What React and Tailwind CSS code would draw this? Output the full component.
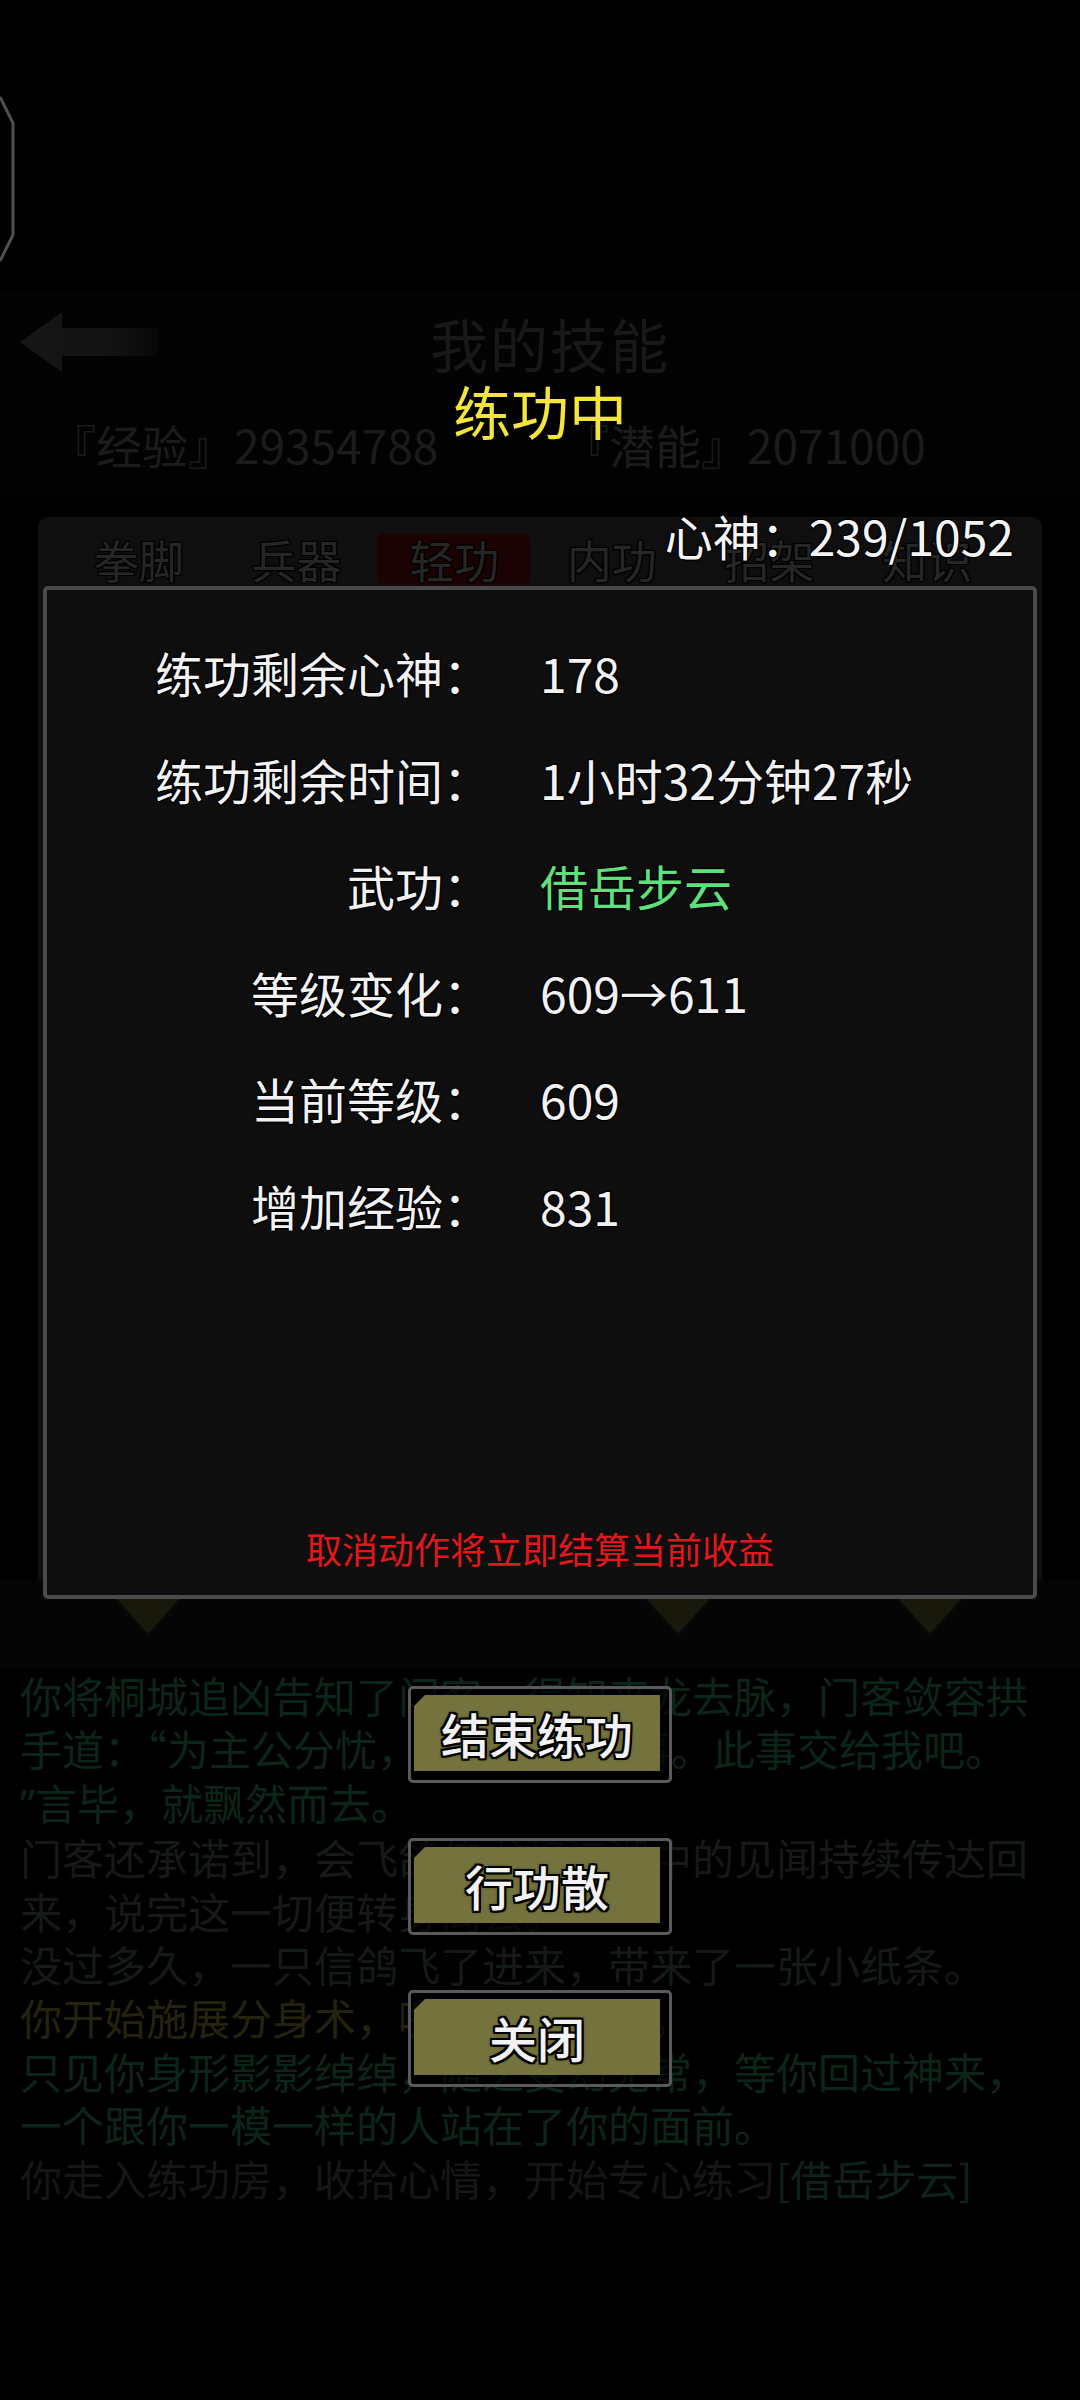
import React from 'react'

/* Practice-in-progress modal over the dimmed skills page. */

const FONT = "font-['Noto_Sans_CJK_SC','Noto_Sans',sans-serif]"
const OUTLINE =
  '[text-shadow:0_0_3px_#000,1px_1px_0_#000,-1px_-1px_0_#000,1px_-1px_0_#000,-1px_1px_0_#000]'
const THICK =
  '[text-shadow:0_0_4px_#000,2px_2px_0_#000,-2px_-2px_0_#000,2px_-2px_0_#000,-2px_2px_0_#000,0_2px_0_#000,0_-2px_0_#000,2px_0_0_#000,-2px_0_0_#000]'

const TABS = ['拳脚', '兵器', '轻功', '内功', '招架', '知识']

const ROWS = [
  { label: '练功剩余心神：', value: '178' },
  { label: '练功剩余时间：', value: '1小时32分钟27秒' },
  { label: '武功：', value: '借岳步云', green: true },
  { label: '等级变化：', value: '609→611' },
  { label: '当前等级：', value: '609' },
  { label: '增加经验：', value: '831' },
]

const STORY = [
  { text: '你将桐城追凶告知了门客，得知来龙去脉，门客敛容拱', tone: 'text-[#0c2519]' },
  { text: '手道：“为主公分忧，乃是分内之事。此事交给我吧。', tone: 'text-[#0c2519]' },
  { quote: true, text: '言毕，就飘然而去。', tone: 'text-[#0c2519]' },
  { text: '门客还承诺到，会飞鸽传书将江湖中的见闻持续传达回', tone: 'text-[#161a16]' },
  { text: '来，说完这一切便转身离去。', tone: 'text-[#161a16]' },
  { text: '没过多久，一只信鸽飞了进来，带来了一张小纸条。', tone: 'text-[#141a15]' },
  { text: '你开始施展分身术，嘴里念念有词。', tone: 'text-[#25230d]' },
  { text: '只见你身形影影绰绰，随之变幻无常，等你回过神来，', tone: 'text-[#0c2519]' },
  { text: '一个跟你一模一样的人站在了你的面前。', tone: 'text-[#0c2519]' },
]

function GameButton({ children }) {
  return (
    <div className="h-[97px] w-[264px] rounded-[5px] border-[3px] border-[#5a5a5a] bg-black/60 pb-[9px] pl-[3px] pr-[9px] pt-[6px]">
      <div className="flex h-full w-full items-center justify-center bg-[#7a7940]/95 [clip-path:polygon(11px_0,100%_0,100%_100%,0_100%,0_11px)]">
        <span className={`text-[48px] font-medium leading-none text-[#f2f2f2] ${THICK}`}>{children}</span>
      </div>
    </div>
  )
}

function Triangle() {
  return (
    <svg width="76" height="42" viewBox="0 0 76 42">
      <path d="M2 0 L74 0 L38 40 Z" fill="#18180b" stroke="#080805" strokeWidth="3" />
    </svg>
  )
}

export default function App() {
  return (
    <div className={`relative h-[2400px] w-[1080px] overflow-hidden bg-black ${FONT}`}>
      {/* frame edge at the far left */}
      <svg className="absolute left-0 top-[96px]" width="18" height="166" viewBox="0 0 18 166">
        <path d="M0 1 L13 27 L13 139 L0 165" fill="none" stroke="#505050" strokeWidth="3" />
      </svg>

      {/* dimmed page behind the modal */}
      <div className="flex flex-col">
        <div className="h-[291px]" />

        <header className="grid h-[103px] grid-cols-[1fr_auto_1fr] items-center bg-[#030303] pl-[20px]">
          <svg width="145" height="64" viewBox="0 0 145 64">
            <defs>
              <linearGradient id="arrowFade" x1="0" x2="1" y1="0" y2="0">
                <stop offset="0" stopColor="#161616" />
                <stop offset="0.7" stopColor="#121212" />
                <stop offset="1" stopColor="#070707" />
              </linearGradient>
            </defs>
            <path d="M0 31 L42 1 L42 17 L138 17 L138 45 L42 45 L42 61 Z" fill="url(#arrowFade)" />
          </svg>
          <div className="text-[58px] leading-none tracking-[2px] text-[#181818]">我的技能</div>
          <div />
        </header>

        <div className="flex h-[100px] items-center bg-[#020202] pl-[50px] text-[46px] leading-none text-[#1b1b1b]">
          <span className="w-[513px]">『经验』29354788</span>
          <span>『潜能』2071000</span>
        </div>

        <div className="mx-[38px] mt-[23px] h-[1063px] rounded-t-[10px] bg-[#0f0f0f] pl-[22px] pr-[36px] pt-[16px]">
          <div className="grid grid-cols-6">
            {TABS.map((t, i) => (
              <div key={t} className="flex justify-center">
                <div
                  className={`flex h-[52px] items-center justify-center rounded-[6px] text-[45px] leading-none text-[#262626] ${OUTLINE} ${
                    i === 2 ? 'w-[154px] bg-[#1c0303]' : 'w-[130px]'
                  }`}
                >
                  {t}
                </div>
              </div>
            ))}
          </div>
        </div>

        <div className="flex h-[88px] items-start bg-[#050505] pt-[16px]">
          <div className="ml-[110px]">
            <Triangle />
          </div>
          <div className="ml-[454px]">
            <Triangle />
          </div>
          <div className="ml-[176px]">
            <Triangle />
          </div>
        </div>

        <div className="pl-[20px] text-[42px] leading-[53.4px]">
          {STORY.map((l, i) => (
            <div key={i} className={`whitespace-nowrap ${l.tone}`}>
              {l.quote && <span className="font-['Noto_Sans',sans-serif]">”</span>}
              {l.text}
            </div>
          ))}
          <div className="whitespace-nowrap text-[#161616]">
            你走入练功房，收拾心情，开始专心练习<span className="text-[#0e2219]">[借岳步云]</span>
          </div>
        </div>
      </div>

      {/* modal layer */}
      <div className="absolute inset-0 flex flex-col items-center">
        <div className={`pt-[381px] text-[58px] leading-[58px] text-[#f3e53c] ${OUTLINE}`}>练功中</div>
        <div className={`mr-[66px] mt-[72px] self-end text-[48px] leading-[48px] text-[#f4f4f4] ${OUTLINE}`}>
          心神：239/1052
        </div>

        <div className="mt-[27px] flex h-[1013px] w-[994px] flex-col rounded-[5px] border-[4px] border-[#4a4a4a] bg-[#0e0e0e] pt-[29px]">
          <div className="grid grid-cols-[444px_1fr] gap-x-[49px]">
            {ROWS.map((r) => (
              <React.Fragment key={r.label}>
                <div className={`flex h-[106.5px] items-center justify-end text-[48px] leading-none text-[#f2f2f2] ${OUTLINE}`}>
                  {r.label}
                </div>
                <div
                  className={`flex h-[106.5px] items-center text-[48px] leading-none ${OUTLINE} ${
                    r.green ? 'text-[#5fe07c]' : 'text-[#f2f2f2]'
                  }`}
                >
                  {r.value}
                </div>
              </React.Fragment>
            ))}
          </div>
          <div className="mt-auto pb-[29px] text-center text-[36px] leading-[36px] text-[#e3171b]">
            取消动作将立即结算当前收益
          </div>
        </div>

        <div className="mt-[87px] flex flex-col items-center gap-[55px]">
          <GameButton>结束练功</GameButton>
          <GameButton>行功散</GameButton>
          <GameButton>关闭</GameButton>
        </div>
      </div>
    </div>
  )
}
